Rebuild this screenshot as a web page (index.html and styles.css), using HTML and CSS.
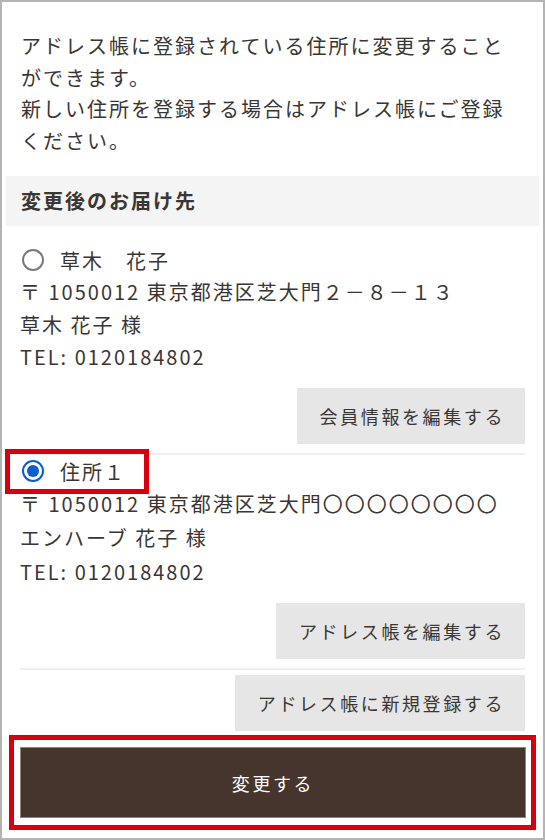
FILE: index.html
```html
<!DOCTYPE html>
<html lang="ja">
<head>
<meta charset="utf-8">
<link rel="stylesheet" href="styles.css">
</head>
<body>
<div class="frame">
  <p class="intro">アドレス帳に登録されている住所に変更することができます。<br>新しい住所を登録する場合はアドレス帳にご登録ください。</p>
  <h2 class="heading">変更後のお届け先</h2>
  <div class="content">
    <div class="item">
      <label class="radio-line"><span class="radio"></span><span>草木　花子</span></label>
      <div class="line">〒 1050012 東京都港区芝大門２－８－１３</div>
      <div class="line">草木 花子 様</div>
      <div class="line">TEL: 0120184802</div>
      <div class="actions"><button class="btn">会員情報を編集する</button></div>
    </div>
    <div class="item">
      <label class="radio-line marked"><span class="radio checked"></span><span>住所１</span><span class="mark"></span></label>
      <div class="line">〒 1050012 東京都港区芝大門〇〇〇〇〇〇〇〇</div>
      <div class="line">エンハーブ 花子 様</div>
      <div class="line">TEL: 0120184802</div>
      <div class="actions"><button class="btn">アドレス帳を編集する</button></div>
    </div>
    <div class="item last">
      <div class="actions"><button class="btn">アドレス帳に新規登録する</button></div>
    </div>
    <div class="submit-wrap"><button class="submit">変更する</button></div>
  </div>
</div>
</body>
</html>
```
FILE: styles.css
```css
* { box-sizing: border-box; }
html, body { margin: 0; padding: 0; background: #fff; }
body {
  font-family: "Noto Sans CJK JP", "Noto Sans", sans-serif;
  color: #3a3633;
  font-size: 20px;
  letter-spacing: 2px;
}
.frame {
  width: 545px;
  height: 840px;
  border: 2px solid #b4b4b4;
  padding: 0 4px;
  overflow: hidden;
}
.intro {
  margin: 0;
  padding: 28px 14px 0 15px;
  line-height: 31.7px;
}
.heading {
  margin: 19px 0 0;
  height: 50px;
  background: #f4f4f4;
  font-size: 20px;
  font-weight: 700;
  line-height: 50px;
  padding-left: 15px;
}
.content {
  padding: 18px 14px 0;
}
.item {
  border-bottom: 2px solid #f0f0f0;
  padding-bottom: 9px;
}
.item.last { border-bottom: none; padding-top: 5px; padding-bottom: 0; }
.item.last .actions { margin-top: 0; }
.line { line-height: 32.5px; }
.item + .item .line { line-height: 34px; }
.radio-line {
  display: flex;
  align-items: center;
  height: 32.5px;
  position: relative;
  width: max-content;
  padding-left: 2px;
}
.radio {
  width: 22px;
  height: 22px;
  border-radius: 50%;
  border: 2px solid #7a7a7a;
  margin-right: 16px;
  display: inline-block;
  position: relative;
}
.radio.checked { border-color: #0b5ed0; }
.radio.checked::after {
  content: "";
  position: absolute;
  left: 3px; top: 3px;
  width: 12px; height: 12px;
  border-radius: 50%;
  background: #0b5ed0;
}
.mark {
  position: absolute;
  left: -15px;
  top: -6px;
  width: 144px;
  height: 45px;
  border: 5px solid #d8000f;
}
.actions {
  display: flex;
  justify-content: flex-end;
  margin-top: 14px;
}
.btn {
  font-family: inherit;
  font-size: 18px;
  letter-spacing: 2.6px;
  color: #3a3633;
  background: #e6e6e6;
  border: none;
  height: 56px;
  padding: 0 20px 0 23px;
}
.submit-wrap {
  margin: 4px -11px 0;
  border: 5px solid #d8000f;
  padding: 7px 5px 7px 6px;
}
.submit {
  display: block;
  width: 100%;
  height: 71px;
  background: #46352c;
  border: 1px solid #8e8580;
  color: #fff;
  font-family: inherit;
  font-size: 18px;
  letter-spacing: 2.6px;
}
```
